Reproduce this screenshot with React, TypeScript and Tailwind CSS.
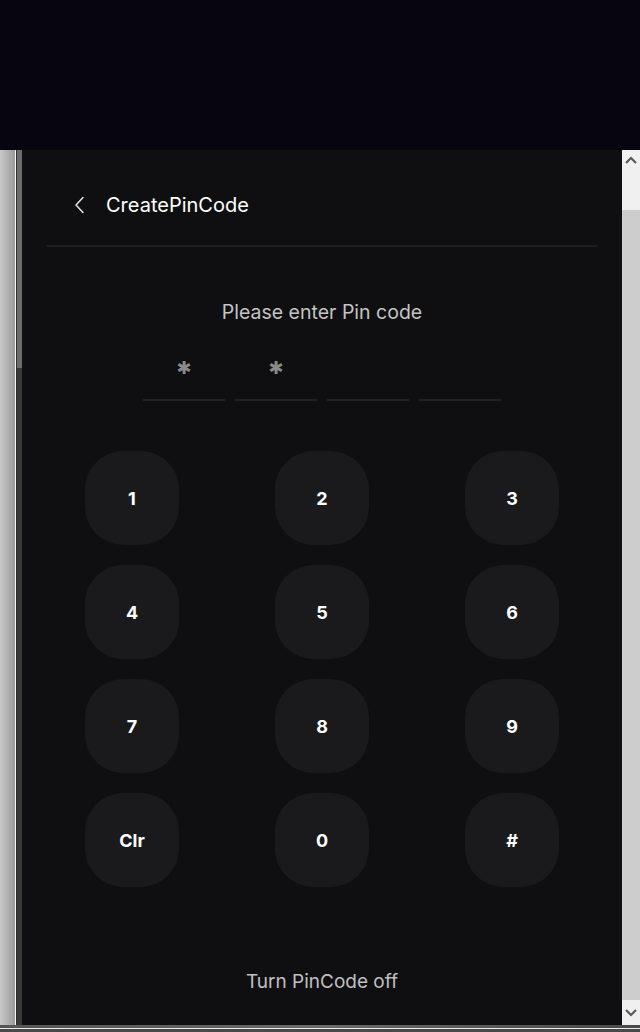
import React from "react";

const keys = ["1", "2", "3", "4", "5", "6", "7", "8", "9", "Clr", "0", "#"];
const entered = 2;

const ChevronLeft: React.FC = () => (
  <svg width="12" height="18" viewBox="0 0 12 18" fill="none">
    <path d="M9 1.5L2 9L9 16.5" stroke="#e6e6e6" strokeWidth="1.5" strokeLinecap="round" strokeLinejoin="round" />
  </svg>
);

const ScrollArrow: React.FC<{ up?: boolean }> = ({ up }) => (
  <svg width="12" height="8" viewBox="0 0 12 8">
    <path d={up ? "M1 7L6 2L11 7" : "M1 1L6 6L11 1"} stroke="#5a5a5a" strokeWidth="2.2" fill="none" />
  </svg>
);

const App: React.FC = () => {
  return (
    <div className="w-[640px] h-[1032px] bg-[#07050f] flex flex-col overflow-hidden" style={{ fontFamily: "Inter, 'Noto Sans', sans-serif" }}>
      <div className="h-[150px] shrink-0" />
      <div className="flex h-[875px]">
        {/* left window edge */}
        <div className="flex shrink-0">
          <div className="w-[15px] bg-gradient-to-r from-[#c9c9c9] to-[#9a9a9a]" />
          <div className="w-[1px] bg-[#f4f4f4]" />
          <div className="w-[1px] bg-[#2e2e2e]" />
          <div className="w-[5px] flex flex-col">
            <div className="h-[218px] bg-[#6c6c6c]" />
            <div className="flex-1 bg-[#3a3a3a]" />
          </div>
        </div>

        {/* main panel */}
        <div className="flex-1 bg-[#0f0f12] flex flex-col">
          <div className="flex items-center h-[24px] mt-[43px] pl-[52px] gap-[20px]">
            <ChevronLeft />
            <span className="text-white text-[20px] leading-none">CreatePinCode</span>
          </div>
          <div className="mx-[25px] mt-[28px] h-[2px] bg-[#1f1f23]" />

          <p className="mt-[54px] text-center text-[#c4c4c4] text-[19.5px] leading-[22px]">Please enter Pin code</p>

          <div className="flex justify-center gap-[10px] mt-[30px]">
            {[0, 1, 2, 3].map((i) => (
              <div key={i} className="w-[82px] flex flex-col items-center">
                <div className="h-[30px] flex items-center justify-center text-[#8a8a8a] text-[18px] leading-none" style={{ fontFamily: "'DejaVu Sans', sans-serif" }}>
                  {i < entered ? "✱" : ""}
                </div>
                <div className="w-full h-[2px] bg-[#222226] mt-[16px]" />
              </div>
            ))}
          </div>

          <div className="grid grid-cols-3 gap-x-[96px] gap-y-[20px] mt-[50px] mx-auto">
            {keys.map((k) => (
              <button
                key={k}
                className="w-[94px] h-[94px] rounded-[38px] bg-[#1a1a1c] text-white text-[18px] font-bold flex items-center justify-center"
              >
                {k}
              </button>
            ))}
          </div>

          <div className="flex-1" />
          <p className="text-center text-[#c0c0c0] text-[19px] leading-[22px] mb-[32px]">Turn PinCode off</p>
        </div>

        {/* right scrollbar */}
        <div className="w-[18px] shrink-0 flex flex-col">
          <div className="h-[60px] bg-[#f0f0f0] flex justify-center pt-[6px]">
            <ScrollArrow up />
          </div>
          <div className="flex-1 bg-[#cdcdcd]" />
          <div className="h-[25px] bg-[#f0f0f0] flex justify-center items-end pb-[8px]">
            <ScrollArrow />
          </div>
        </div>
      </div>
      <div className="flex-1 flex flex-col">
        <div className="h-[3px] bg-gradient-to-r from-[#555] via-[#6a6a6a] to-[#4a4a4a]" />
        <div className="h-[1px] bg-[#e8e8e8]" />
        <div className="flex-1 bg-[#4a4a4a]" />
      </div>
    </div>
  );
};

export default App;
